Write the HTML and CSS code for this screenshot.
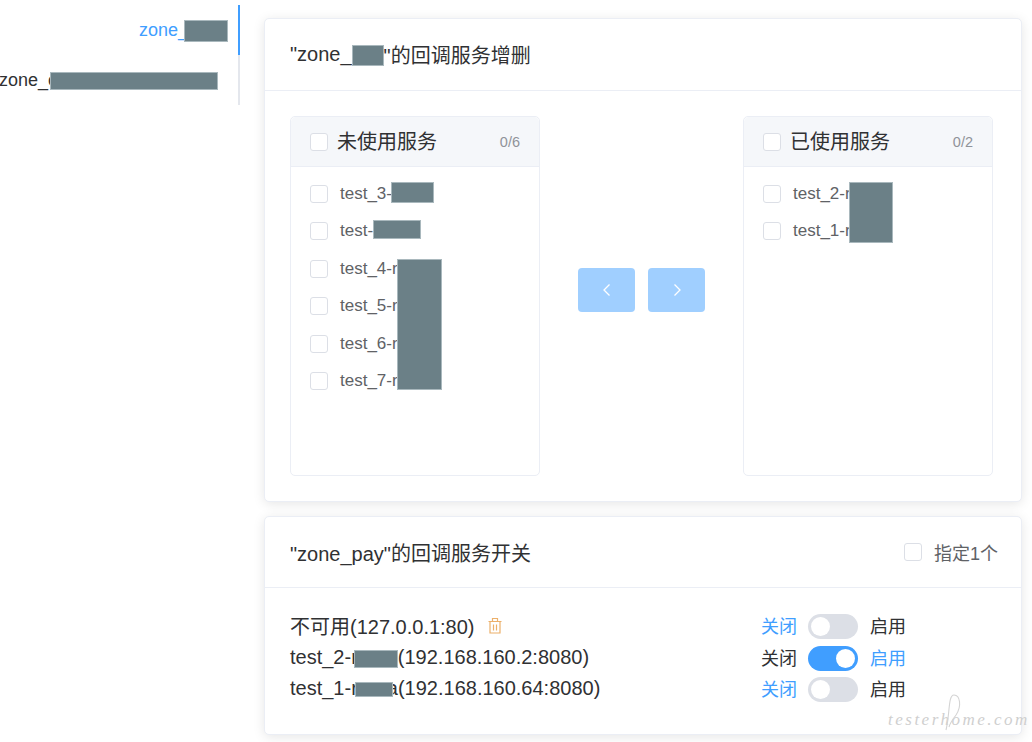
FILE: index.html
```html
<!DOCTYPE html>
<html lang="zh">
<head>
<meta charset="utf-8">
<title>回调服务</title>
<link rel="stylesheet" href="styles.css">
</head>
<body>
<div class="page">
  <nav class="tabs">
    <div class="tab active"><span>zone_</span><i class="redact r-tab1"></i></div>
    <div class="tab"><span>zone_c</span><i class="redact r-tab2"></i></div>
  </nav>
  <main class="content">
    <section class="card">
      <header class="card-head"><h2>"zone_<i class="redact r-title"></i>"的回调服务增删</h2></header>
      <div class="transfer">
        <div class="panel">
          <div class="panel-head"><span class="box"></span><span class="panel-title">未使用服务</span><span class="count">0/6</span></div>
          <ul class="panel-list">
            <li><span class="box"></span><span>test_3-</span><i class="redact r-a"></i></li>
            <li><span class="box"></span><span>test-</span><i class="redact r-b"></i></li>
            <li><span class="box"></span><span>test_4-r</span></li>
            <li><span class="box"></span><span>test_5-r</span></li>
            <li><span class="box"></span><span>test_6-r</span></li>
            <li><span class="box"></span><span>test_7-r</span></li>
          </ul>
          <i class="redact over r-c"></i>
        </div>
        <div class="arrows">
          <button class="arrow" type="button"><svg viewBox="0 0 16 16" width="16" height="16"><path d="M10.500 2.500 5 8l5.500 5.500" /></svg></button>
          <button class="arrow" type="button"><svg viewBox="0 0 16 16" width="16" height="16"><path d="M5.500 2.500 11 8l-5.500 5.500" /></svg></button>
        </div>
        <div class="panel">
          <div class="panel-head"><span class="box"></span><span class="panel-title">已使用服务</span><span class="count">0/2</span></div>
          <ul class="panel-list">
            <li><span class="box"></span><span>test_2-r</span></li>
            <li><span class="box"></span><span>test_1-r</span></li>
          </ul>
          <i class="redact over r-d"></i>
        </div>
      </div>
    </section>
    <section class="card">
      <header class="card-head split">
        <h2>"zone_pay"的回调服务开关</h2>
        <label class="pick"><span class="box"></span><span>指定1个</span></label>
      </header>
      <div class="switches">
        <div class="names">
          <div class="name">不可用(127.0.0.1:80)<svg class="trash" viewBox="0 0 14 17" width="14" height="17"><path d="M.5 4.500h13M4.500 4.500V1.500h5v3M2 4.500v11.500h10V4.500M5.500 7.500v6M8.500 7.500v6"/></svg></div>
          <div class="name">test_2-r<i class="redact r-n1"></i>(192.168.160.2:8080)</div>
          <div class="name">test_1-r<i class="redact r-n2"></i>a(192.168.160.64:8080)</div>
        </div>
        <div class="toggles">
          <div class="toggle"><span class="lbl on-text">关闭</span><span class="sw"></span><span class="lbl">启用</span></div>
          <div class="toggle"><span class="lbl">关闭</span><span class="sw is-on"></span><span class="lbl on-text">启用</span></div>
          <div class="toggle"><span class="lbl on-text">关闭</span><span class="sw"></span><span class="lbl">启用</span></div>
        </div>
      </div>
    </section>
  </main>
</div>
<div class="mark"><span>testerhome.com</span><svg class="mark-loop" viewBox="0 0 20 40" width="20" height="40"><path d="M3 38C7 22 5 3 11 3c6 0 8 11 2 20-3 4-6 8-7 12"/></svg></div>
</body>
</html>
```
FILE: styles.css
```css
* { box-sizing: border-box; }
html, body { margin: 0; padding: 0; }
body {
  width: 1032px; height: 742px; overflow: hidden; background: #fff; position: relative;
  font-family: "Liberation Sans", "Noto Sans CJK SC", sans-serif; color: #303133;
}
.page { display: flex; align-items: flex-start; }
.tabs { width: 240px; margin-top: 5px; border-right: 2px solid #e4e7ed; flex: none; position: relative; }
.tab {
  height: 50px; display: flex; align-items: center; justify-content: flex-end;
  font-size: 18px; padding-right: 20px; white-space: nowrap; position: relative;
}
.tab.active { color: #409eff; padding-right: 10px; }
.tab.active::after { content: ""; position: absolute; right: -2px; top: 0; width: 2px; height: 50px; background: #409eff; }
.redact { display: inline-block; flex: none; position: relative; z-index: 1; background: #6b8087; outline: 1px solid #a9b8bd; outline-offset: -1px; }
.r-tab1 { width: 44px; height: 22px; margin: 2px 0 0 -4px; }
.r-tab2 { width: 168px; height: 18px; margin: 1px 0 0 -7px; }
.content { width: 758px; margin-left: 24px; margin-top: 18px; display: flex; flex-direction: column; gap: 14px; }
.card { background: #fff; border: 1px solid #ebeef5; border-radius: 5px; box-shadow: 0 2px 12px rgba(0,0,0,.1); }
.card-head { height: 72px; padding: 0 25px; border-bottom: 1px solid #ebeef5; display: flex; align-items: center; }
.card-head.split { height: 71px; justify-content: space-between; padding-right: 23px; }
.card-head h2 { margin: 0; font-size: 20px; font-weight: 400; display: flex; align-items: center; white-space: pre; }
.r-title { width: 32px; height: 21px; margin: 2px 0 0 0; }
.transfer { display: flex; justify-content: space-between; align-items: center; padding: 25px 28px 25px 25px; }
.panel { width: 250px; height: 360px; border: 1px solid #ebeef5; border-radius: 5px; position: relative; }
.panel-head { height: 50px; background: #f5f7fa; border-bottom: 1px solid #ebeef5; display: flex; align-items: center; padding: 0 19px; border-radius: 5px 5px 0 0; }
.panel-title { font-size: 20px; margin-left: 9px; flex: 1; padding-bottom: 2px; }
.count { font-size: 14.5px; color: #909399; }
.box { width: 18px; height: 18px; flex: none; border: 1px solid #dcdfe6; border-radius: 3px; background: #fff; }
.panel-list { list-style: none; margin: 0; padding: 8px 0 0 19px; }
.panel-list li { height: 37.5px; display: flex; align-items: center; font-size: 17px; color: #606266; white-space: nowrap; }
.panel-list li .box { margin-right: 12px; }
.r-a { width: 43px; height: 21px; margin: -2px 0 0 -1px; }
.r-b { width: 48px; height: 19px; margin-top: -4px; }
.over { position: absolute; }
.r-c { left: 106px; top: 142px; width: 45px; height: 131px; }
.r-d { left: 105px; top: 65px; width: 44px; height: 61px; }
.arrows { display: flex; gap: 13px; margin-top: -12px; }
.arrow { width: 57px; height: 44px; border: 0; padding: 0; border-radius: 4px; background: #a0cfff; display: flex; align-items: center; justify-content: center; }
.arrow svg { fill: none; stroke: #fff; stroke-width: 1.3; }
.pick { display: flex; align-items: center; gap: 12px; font-size: 18px; color: #606266; }
.switches { display: flex; justify-content: space-between; padding: 22px 115px 0 25px; height: 146px; }
.names { font-size: 20px; }
.name { height: 31px; display: flex; align-items: center; white-space: pre; }
.name:first-child { margin-bottom: 1px; }
.trash { margin-left: 13px; fill: none; stroke: #ecb06a; stroke-width: 1.2; }
.r-n1 { width: 44px; height: 18px; margin: 3px 0 0 -4px; }
.r-n2 { width: 38px; height: 15px; margin: 1px -6px 0 -3px; }
.toggles { margin-top: 1px; }
.toggle { height: 31.5px; display: flex; align-items: center; gap: 11px; font-size: 18px; }
.lbl { margin-top: -3px; }
.sw + .lbl { margin-left: 1px; }
.on-text { color: #409eff; }
.sw { width: 50px; height: 25px; border-radius: 13px; background: #dcdfe6; position: relative; }
.sw::after { content: ""; position: absolute; left: 3px; top: 3px; width: 19px; height: 19px; border-radius: 50%; background: #fff; }
.sw.is-on { background: #409eff; }
.sw.is-on::after { left: 28px; }
.mark { position: absolute; left: 888px; top: 710px; width: 144px; font: italic 17px "Liberation Serif", serif; letter-spacing: 2.5px; color: #cfcfcf; white-space: nowrap; }
.mark-loop { position: absolute; left: 55px; top: -18px; fill: none; stroke: #d4d4d4; stroke-width: 1.1; }
```
